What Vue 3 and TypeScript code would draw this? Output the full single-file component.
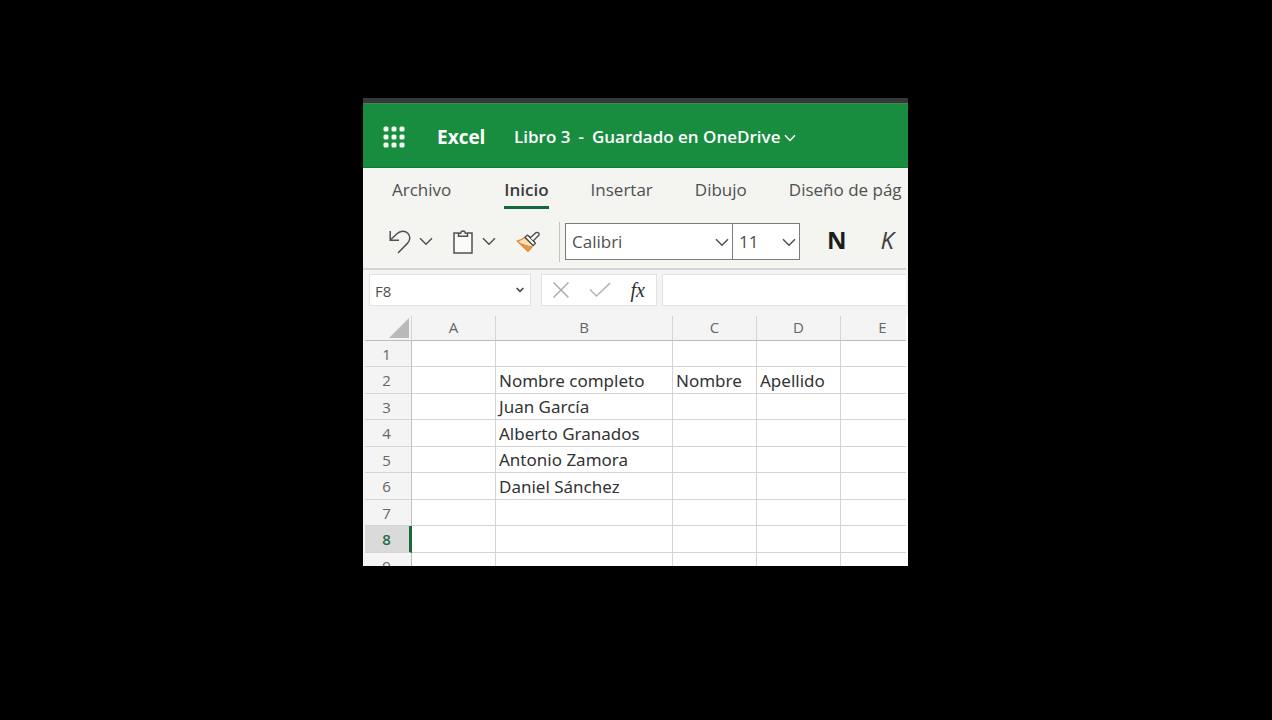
<script setup lang="ts">
import { ref } from 'vue'

interface Tab {
  id: string
  label: string
}

const tabs: Tab[] = [
  { id: 'archivo', label: 'Archivo' },
  { id: 'inicio', label: 'Inicio' },
  { id: 'insertar', label: 'Insertar' },
  { id: 'dibujo', label: 'Dibujo' },
  { id: 'diseno', label: 'Diseño de pág' },
]
const activeTab = ref('inicio')

const fontName = ref('Calibri')
const fontSize = ref('11')
const cellName = ref('F8')
const formula = ref('')

const columns: string[] = ['A', 'B', 'C', 'D', 'E']
const rowCount = 9
const selectedRow = 8

const cells: Record<string, string> = {
  B2: 'Nombre completo',
  C2: 'Nombre',
  D2: 'Apellido',
  B3: 'Juan García',
  B4: 'Alberto Granados',
  B5: 'Antonio Zamora',
  B6: 'Daniel Sánchez',
}
</script>

<template>
  <div class="stage">
    <main class="window">
      <div class="strip"></div>
      <header class="titlebar">
        <button class="launcher" type="button" aria-label="Iniciador de aplicaciones">
          <svg width="22" height="22" viewBox="0 0 22 22" fill="#f2faf2">
            <template v-for="y in 3" :key="y">
              <rect
                v-for="x in 3"
                :key="x"
                :x="(x - 1) * 8 + 0.5"
                :y="(y - 1) * 8 + 0.5"
                width="5"
                height="5"
                rx="1.6"
              />
            </template>
          </svg>
        </button>
        <span class="brand">Excel</span>
        <button class="doc" type="button">
          <span>Libro 3</span><span>-</span><span>Guardado en OneDrive</span>
          <svg width="12" height="8" viewBox="0 0 12 8" fill="none" stroke="#fff" stroke-width="1.5">
            <path d="M1 1.2 6 6.4 11 1.2" />
          </svg>
        </button>
      </header>

      <nav class="tabs">
        <button
          v-for="tab in tabs"
          :key="tab.id"
          type="button"
          class="tab"
          :class="{ active: tab.id === activeTab }"
          @click="activeTab = tab.id"
        >
          {{ tab.label }}
        </button>
      </nav>

      <div class="toolbar">
        <button class="tool undo" type="button" aria-label="Deshacer">
          <svg width="24" height="26" viewBox="0 0 24 26" fill="none" stroke="#505050" stroke-width="1.5">
            <path d="M2.200 2V11.200H11" />
            <path d="M2.500 10.800 9 4.800C12.200 1.600 17 1.400 19.800 4.200c2.800 2.800 2.600 7.200-.4 10.200L10 24" />
          </svg>
        </button>
        <button class="tool arrow" type="button" aria-label="Opciones de deshacer">
          <svg width="14" height="9" viewBox="0 0 14 9" fill="none" stroke="#505050" stroke-width="1.5">
            <path d="M1 1.300 7 7.200 13 1.300" />
          </svg>
        </button>
        <button class="tool paste" type="button" aria-label="Pegar">
          <svg width="20" height="24" viewBox="0 0 20 24" fill="none" stroke="#505050" stroke-width="1.500">
            <path d="M5.500 3H1v20h18V3h-4.500" fill="#fbfbfa" />
            <path d="M5.500 6.200V3.200H7.600C7.800 1.700 8.700.900 10 .900s2.200.800 2.400 2.300h2.100v3z" fill="#f4f4f1" />
          </svg>
        </button>
        <button class="tool arrow" type="button" aria-label="Opciones de pegado">
          <svg width="14" height="9" viewBox="0 0 14 9" fill="none" stroke="#505050" stroke-width="1.500">
            <path d="M1 1.300 7 7.200 13 1.300" />
          </svg>
        </button>
        <button class="tool brush" type="button" aria-label="Copiar formato">
          <svg width="25" height="22" viewBox="0 0 25 22" fill="none" stroke-linejoin="round">
            <path d="M8.500 6.500C6.500 8.300 4 9.600 1.300 10L12 20.300c2-1.800 4-3.700 5-6.300z" fill="#f9dfb4" stroke="#d98b3d" stroke-width="1.300" />
            <path d="M4.500 12.800 15.500 16.200 12 20.300z" fill="#e79a48" stroke="#d98b3d" />
            <path d="m9 6.300 2.300-2.200 3.200 2.500 5.600-5c1.900-1 4 1 2.700 2.700l-5.300 5.300 1.900 2.800-2.200 2.200z" fill="#f4f4f1" stroke="#484848" stroke-width="1.300" />
            <path d="m11.300 4.100 8.100 8.300" stroke="#484848" stroke-width="1" />
          </svg>
        </button>
        <span class="divider"></span>
        <div class="combo family">
          <select v-model="fontName" aria-label="Fuente">
            <option>Calibri</option>
          </select>
          <svg width="14" height="9" viewBox="0 0 14 9" fill="none" stroke="#505050" stroke-width="1.500">
            <path d="M1 1.300 7 7.200 13 1.300" />
          </svg>
        </div>
        <div class="combo size">
          <select v-model="fontSize" aria-label="Tamaño de fuente">
            <option>11</option>
          </select>
          <svg width="14" height="9" viewBox="0 0 14 9" fill="none" stroke="#505050" stroke-width="1.500">
            <path d="M1 1.300 7 7.200 13 1.300" />
          </svg>
        </div>
        <button class="tool bold" type="button" aria-label="Negrita">N</button>
        <button class="tool italic" type="button" aria-label="Cursiva">K</button>
      </div>

      <div class="formula-row">
        <div class="namebox">
          <input v-model="cellName" type="text" aria-label="Cuadro de nombres" />
          <svg width="8" height="6" viewBox="0 0 8 6" fill="none" stroke="#444" stroke-width="1.600">
            <path d="M.6 1 4 4.300 7.400 1" />
          </svg>
        </div>
        <div class="actions">
          <button class="tool" type="button" aria-label="Cancelar">
            <svg width="18" height="18" viewBox="0 0 18 18" fill="none" stroke="#acacac" stroke-width="1.500">
              <path d="M1.500 1.500 16.500 16.500M16.500 1.500 1.500 16.500" />
            </svg>
          </button>
          <button class="tool" type="button" aria-label="Introducir">
            <svg width="22" height="16" viewBox="0 0 22 16" fill="none" stroke="#b4b4b4" stroke-width="1.600">
              <path d="M1 7.500 7.500 14 21 1.200" />
            </svg>
          </button>
          <button class="tool fx" type="button" aria-label="Insertar función">fx</button>
        </div>
        <input v-model="formula" class="formula" type="text" aria-label="Barra de fórmulas" />
      </div>

      <div class="sheet">
        <table>
          <colgroup>
            <col class="c-head" />
            <col v-for="c in columns" :key="c" :class="{ 'c-wide': c === 'B' }" />
          </colgroup>
          <thead>
            <tr>
              <th class="corner" aria-label="Seleccionar todo">
                <svg width="20" height="20" viewBox="0 0 20 20"><path d="M20 0V20H0z" fill="#b9b9b9" /></svg>
              </th>
              <th v-for="c in columns" :key="c" scope="col">{{ c }}</th>
            </tr>
          </thead>
          <tbody>
            <tr v-for="r in rowCount" :key="r" :class="{ selected: r === selectedRow }">
              <th scope="row">{{ r }}</th>
              <td v-for="c in columns" :key="c">{{ cells[c + r] ?? '' }}</td>
            </tr>
          </tbody>
        </table>
      </div>
    </main>
  </div>
</template>

<style>
body {
  background: #000;
}
</style>

<style scoped>
.stage {
  box-sizing: border-box;
  display: flex;
  height: 100vh;
  padding: 98px 364px 154px 363px;
  background: #000;
  font-family: 'Open Sans', 'Noto Sans', sans-serif;
  color: #505050;
}
.window {
  flex: 1;
  min-width: 0;
  display: flex;
  flex-direction: column;
  overflow: hidden;
  background: #f4f4f1;
}
.window > * {
  flex-shrink: 0;
}
button,
input,
select {
  font: inherit;
  color: inherit;
}
button {
  border: 0;
  padding: 0;
  background: none;
  white-space: nowrap;
}
svg {
  display: block;
}
.strip {
  height: 5px;
  background: #36373b;
}
.titlebar {
  display: flex;
  align-items: center;
  box-sizing: border-box;
  height: 65px;
  padding: 2px 0 0 20px;
  border-top: 1px solid #43864f;
  border-bottom: 1px solid #137a33;
  background: #188d3f;
  color: #fff;
}
.brand {
  margin-left: 32px;
  width: 77px;
  font-size: 19px;
  font-weight: 700;
}
.doc {
  display: flex;
  align-items: center;
  gap: 8px;
  font-size: 17px;
  font-weight: 600;
}
.doc svg {
  margin: 2px 0 0 -4px;
}
.tabs {
  display: flex;
  gap: 42px;
  height: 41px;
  padding-left: 29px;
  margin-right: 2px;
  overflow: hidden;
  font-size: 17px;
}
.tab {
  box-sizing: border-box;
  border-top: 4px solid transparent;
  border-bottom: 3px solid transparent;
}
.tab:first-child {
  margin-right: 11px;
}
.tab.active {
  border-bottom-color: #12693a;
  font-weight: 600;
  color: #3c3c3c;
}
.toolbar {
  display: flex;
  align-items: center;
  box-sizing: border-box;
  height: 61px;
  margin-right: 2px;
  padding: 6px 0 0 25px;
  border-bottom: 2px solid #d4d4d2;
}
.arrow {
  margin-left: 7px;
}
.paste {
  margin-left: 20px;
}
.paste + .arrow {
  margin-left: 9px;
}
.brush {
  margin-left: 20px;
}
.divider {
  width: 1px;
  height: 40px;
  margin: 0 5px 0 18px;
  background: #c4c4c4;
}
.combo {
  position: relative;
  box-sizing: border-box;
  height: 37px;
  border: 1px solid #7c7c7c;
  background: #fff;
  font-size: 17px;
}
.combo select {
  width: 100%;
  height: 100%;
  border: 0;
  padding: 0 0 0 6px;
  background: none;
  appearance: none;
}
.combo svg {
  position: absolute;
  right: 3px;
  top: 14px;
  pointer-events: none;
}
.family {
  width: 168px;
}
.size {
  width: 67px;
  border-left: 0;
}
.bold,
.italic {
  margin-bottom: 4px;
  font-size: 24px;
  line-height: 36px;
}
.bold {
  margin-left: 27px;
  font-weight: 700;
  color: #1c1c1c;
}
.italic {
  margin-left: 34px;
  font-style: italic;
  color: #404040;
}
.formula-row {
  display: flex;
  height: 46px;
  box-sizing: border-box;
  padding: 4px 2px 10px 6px;
  background: #f4f4f4;
}
.namebox,
.actions,
.formula {
  box-sizing: border-box;
  border: 1px solid #e2e2e2;
  background: #fff;
}
.namebox {
  display: flex;
  align-items: center;
  width: 162px;
  padding-right: 6px;
}
.namebox input {
  flex: 1;
  min-width: 0;
  border: 0;
  padding: 2px 0 0 5px;
  background: none;
  font-size: 15px;
}
.actions {
  display: flex;
  align-items: center;
  justify-content: space-between;
  width: 116px;
  margin: 0 5px 0 10px;
  padding: 0 11px 0 10px;
}
.fx {
  font-family: 'Liberation Serif', serif;
  font-style: italic;
  font-size: 20px;
  line-height: 24px;
  color: #303030;
}
.formula {
  flex: 1;
  min-width: 0;
  border-right: 0;
  padding: 0 6px;
}
.sheet {
  flex: 1 1 0;
  min-height: 0;
  overflow: hidden;
  padding-left: 2px;
  border-right: 2px solid #fff;
  background: #f4f4f4;
}
table {
  width: 560px;
  table-layout: fixed;
  border-collapse: separate;
  border-spacing: 0;
}
col {
  width: 84px;
}
.c-head {
  width: 47px;
}
.c-wide {
  width: 177px;
}
th,
td {
  box-sizing: border-box;
  padding: 0;
  border-right: 1px solid #d4d4d4;
  border-bottom: 1px solid #d4d4d4;
  white-space: nowrap;
  line-height: 24px;
}
th {
  background: #f4f4f4;
  font-weight: 400;
  font-size: 15px;
  color: #666;
}
thead th {
  height: 25px;
  padding-bottom: 2px;
  border-bottom-color: #bcbcbc;
  line-height: 22px;
}
thead .corner {
  padding-bottom: 0;
}
.corner svg {
  margin: 2px 2px 2px auto;
}
tbody th {
  padding-right: 3px;
  border-right-color: #c0c0c0;
}
tbody tr {
  height: 27px;
}
tbody tr:nth-child(odd) {
  height: 26px;
}
td {
  padding: 1px 0 0 3px;
  background: #fff;
  font-family: 'Noto Sans', sans-serif;
  font-size: 17px;
  color: #333;
}
.selected th {
  border-right: 3px solid #1a6b3c;
  padding-right: 1px;
  background: #dadada;
  font-weight: 600;
  color: #2b6b43;
}
</style>
